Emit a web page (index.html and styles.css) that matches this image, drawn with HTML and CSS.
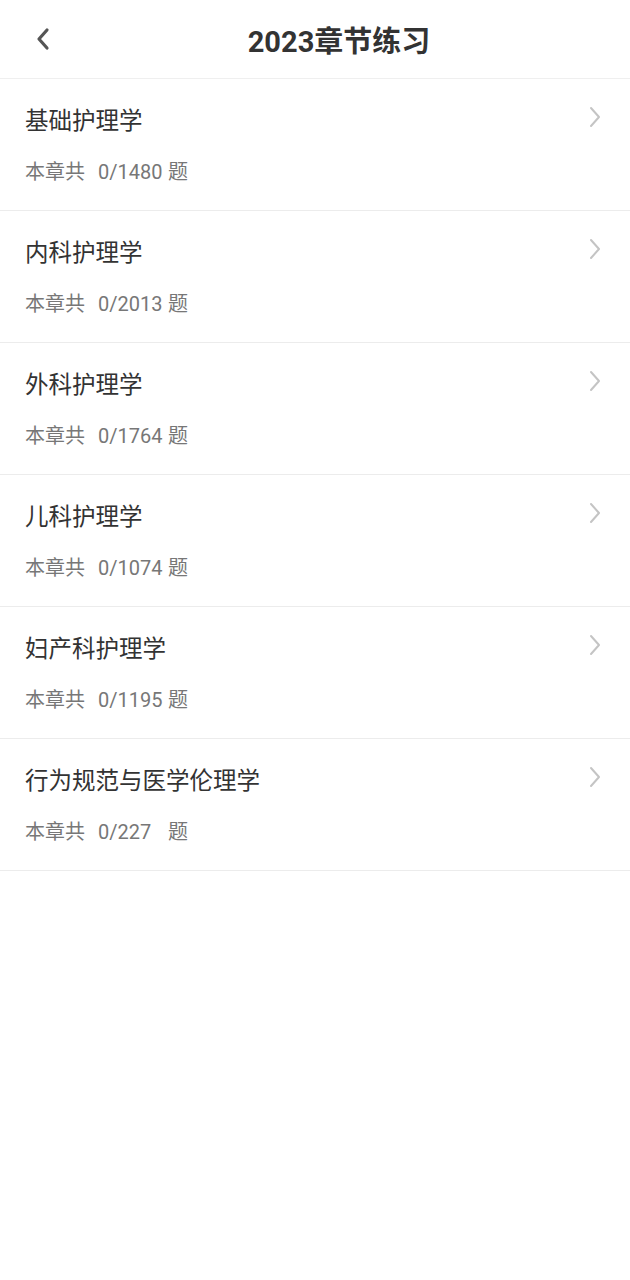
FILE: index.html
```html
<!DOCTYPE html>
<html lang="zh">
<head>
<meta charset="utf-8">
<title>2023章节练习</title>
<link rel="stylesheet" href="styles.css">
</head>
<body>
<header class="topbar">
  <div class="back">
    <svg width="16" height="24" viewBox="0 0 16 24"><path d="M12 3 L4 12 L12 21" fill="none" stroke="#555" stroke-width="3.2" stroke-linecap="round" stroke-linejoin="round"/></svg>
  </div>
  <h1 class="title">2023章节练习</h1>
</header>
<ul class="list">
  <li class="item"><div class="head"><span class="name">基础护理学</span><svg class="chev" width="14" height="22" viewBox="0 0 14 22"><path d="M3 2 L11 11 L3 20" fill="none" stroke="#c4c4c4" stroke-width="2" stroke-linecap="round" stroke-linejoin="round"/></svg></div><div class="meta"><span class="label">本章共</span><span class="num">0/1480</span><span>题</span></div></li>
  <li class="item"><div class="head"><span class="name">内科护理学</span><svg class="chev" width="14" height="22" viewBox="0 0 14 22"><path d="M3 2 L11 11 L3 20" fill="none" stroke="#c4c4c4" stroke-width="2" stroke-linecap="round" stroke-linejoin="round"/></svg></div><div class="meta"><span class="label">本章共</span><span class="num">0/2013</span><span>题</span></div></li>
  <li class="item"><div class="head"><span class="name">外科护理学</span><svg class="chev" width="14" height="22" viewBox="0 0 14 22"><path d="M3 2 L11 11 L3 20" fill="none" stroke="#c4c4c4" stroke-width="2" stroke-linecap="round" stroke-linejoin="round"/></svg></div><div class="meta"><span class="label">本章共</span><span class="num">0/1764</span><span>题</span></div></li>
  <li class="item"><div class="head"><span class="name">儿科护理学</span><svg class="chev" width="14" height="22" viewBox="0 0 14 22"><path d="M3 2 L11 11 L3 20" fill="none" stroke="#c4c4c4" stroke-width="2" stroke-linecap="round" stroke-linejoin="round"/></svg></div><div class="meta"><span class="label">本章共</span><span class="num">0/1074</span><span>题</span></div></li>
  <li class="item"><div class="head"><span class="name">妇产科护理学</span><svg class="chev" width="14" height="22" viewBox="0 0 14 22"><path d="M3 2 L11 11 L3 20" fill="none" stroke="#c4c4c4" stroke-width="2" stroke-linecap="round" stroke-linejoin="round"/></svg></div><div class="meta"><span class="label">本章共</span><span class="num">0/1195</span><span>题</span></div></li>
  <li class="item"><div class="head"><span class="name">行为规范与医学伦理学</span><svg class="chev" width="14" height="22" viewBox="0 0 14 22"><path d="M3 2 L11 11 L3 20" fill="none" stroke="#c4c4c4" stroke-width="2" stroke-linecap="round" stroke-linejoin="round"/></svg></div><div class="meta"><span class="label">本章共</span><span class="num">0/227</span><span>题</span></div></li>
</ul>
</body>
</html>
```
FILE: styles.css
```css
* { box-sizing: border-box; }
body {
  margin: 0;
  background: #fff;
  font-family: Roboto, "Noto Sans CJK SC", sans-serif;
  color: #333;
}
.topbar {
  height: 79px;
  display: flex;
  align-items: center;
  border-bottom: 1px solid #efefef;
}
.back {
  padding-left: 35px;
  width: 52px;
  display: flex;
  align-items: center;
}
.title {
  flex: 1;
  margin: 0 0 0 -4px;
  text-align: center;
  font-size: 29px;
  font-weight: 700;
  color: #333;
}
.list {
  list-style: none;
  margin: 0;
  padding: 0;
}
.item {
  height: 132px;
  padding: 27px 28px 0 25px;
  border-bottom: 1px solid #ececec;
}
.head {
  display: flex;
  align-items: center;
  justify-content: space-between;
  height: 30px;
}
.name {
  font-size: 23.5px;
  line-height: 30px;
  color: #333;
}
.chev { margin-top: -8px; }
.meta {
  margin-top: 23px;
  font-size: 20px;
  line-height: 26px;
  color: #777;
  display: flex;
}
.label { width: 73px; }
.num { width: 70px; }
```
